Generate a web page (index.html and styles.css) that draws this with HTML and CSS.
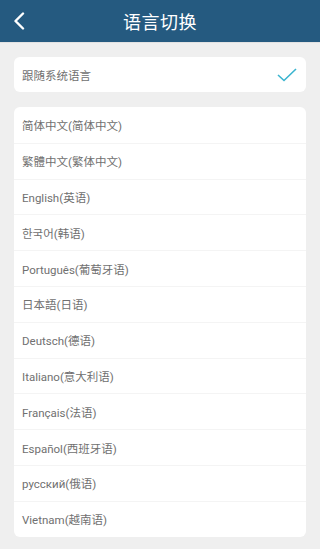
FILE: index.html
```html
<!DOCTYPE html>
<html>
<head>
    <title>语言切换</title>
    <meta content="text/html;charset=utf-8" http-equiv="Content-Type">
    <link rel="stylesheet" href="styles.css">
</head>
<body>
<div class="header">
    <a class="back-but">
        <svg width="12" height="18" viewBox="0 0 12 18">
            <polyline points="10,1.5 2.5,9 10,16.5" fill="none" stroke="#ffffff" stroke-width="2.4" stroke-linecap="round" stroke-linejoin="round"/>
        </svg>
    </a>
    <h1>语言切换</h1>
</div>
<div class="content">
    <div class="card">
        <div class="lang-row lang-sys">
            <span>跟随系统语言</span>
            <svg class="check" width="20" height="14" viewBox="0 0 20 14">
                <polyline points="1,7 7,12.5 19,1" fill="none" stroke="#3ab4cf" stroke-width="1.6"/>
            </svg>
        </div>
    </div>
    <div class="card lang-list">
        <div class="lang-row">简体中文(简体中文)</div>
        <div class="lang-row">繁體中文(繁体中文)</div>
        <div class="lang-row">English(英语)</div>
        <div class="lang-row">한국어(韩语)</div>
        <div class="lang-row">Português(葡萄牙语)</div>
        <div class="lang-row">日本語(日语)</div>
        <div class="lang-row">Deutsch(德语)</div>
        <div class="lang-row">Italiano(意大利语)</div>
        <div class="lang-row">Français(法语)</div>
        <div class="lang-row">Español(西班牙语)</div>
        <div class="lang-row">русский(俄语)</div>
        <div class="lang-row">Vietnam(越南语)</div>
    </div>
</div>
</body>
</html>
```

FILE: styles.css
```css
body {
    margin: 0;
    background-color: #efefef;
    font-family: Roboto, "Noto Sans CJK SC", sans-serif;
}

.header {
    height: 42px;
    background-color: #255a80;
    border-bottom: 1px solid #e2e2e2;
    display: flex;
    align-items: center;
    justify-content: center;
    position: relative;
}

.header h1 {
    margin: 0;
    color: #ffffff;
    font-size: 18px;
    font-weight: normal;
    letter-spacing: 0.5px;
}

.back-but {
    position: absolute;
    left: 13px;
    top: 12px;
    display: flex;
}

.content {
    padding: 14px 14px 0 14px;
    display: flex;
    flex-direction: column;
    gap: 15px;
}

.card {
    background-color: #ffffff;
    border-radius: 6px;
}

.lang-row {
    height: 35.8px;
    padding: 0 8px;
    display: flex;
    align-items: center;
    justify-content: space-between;
    color: #707070;
    font-size: 11.5px;
    border-top: 1px solid #f4f4f4;
    box-sizing: border-box;
}

.lang-row:first-child {
    border-top: none;
}

.lang-sys {
    height: 35px;
}

.check {
    margin-right: 1px;
}
```
